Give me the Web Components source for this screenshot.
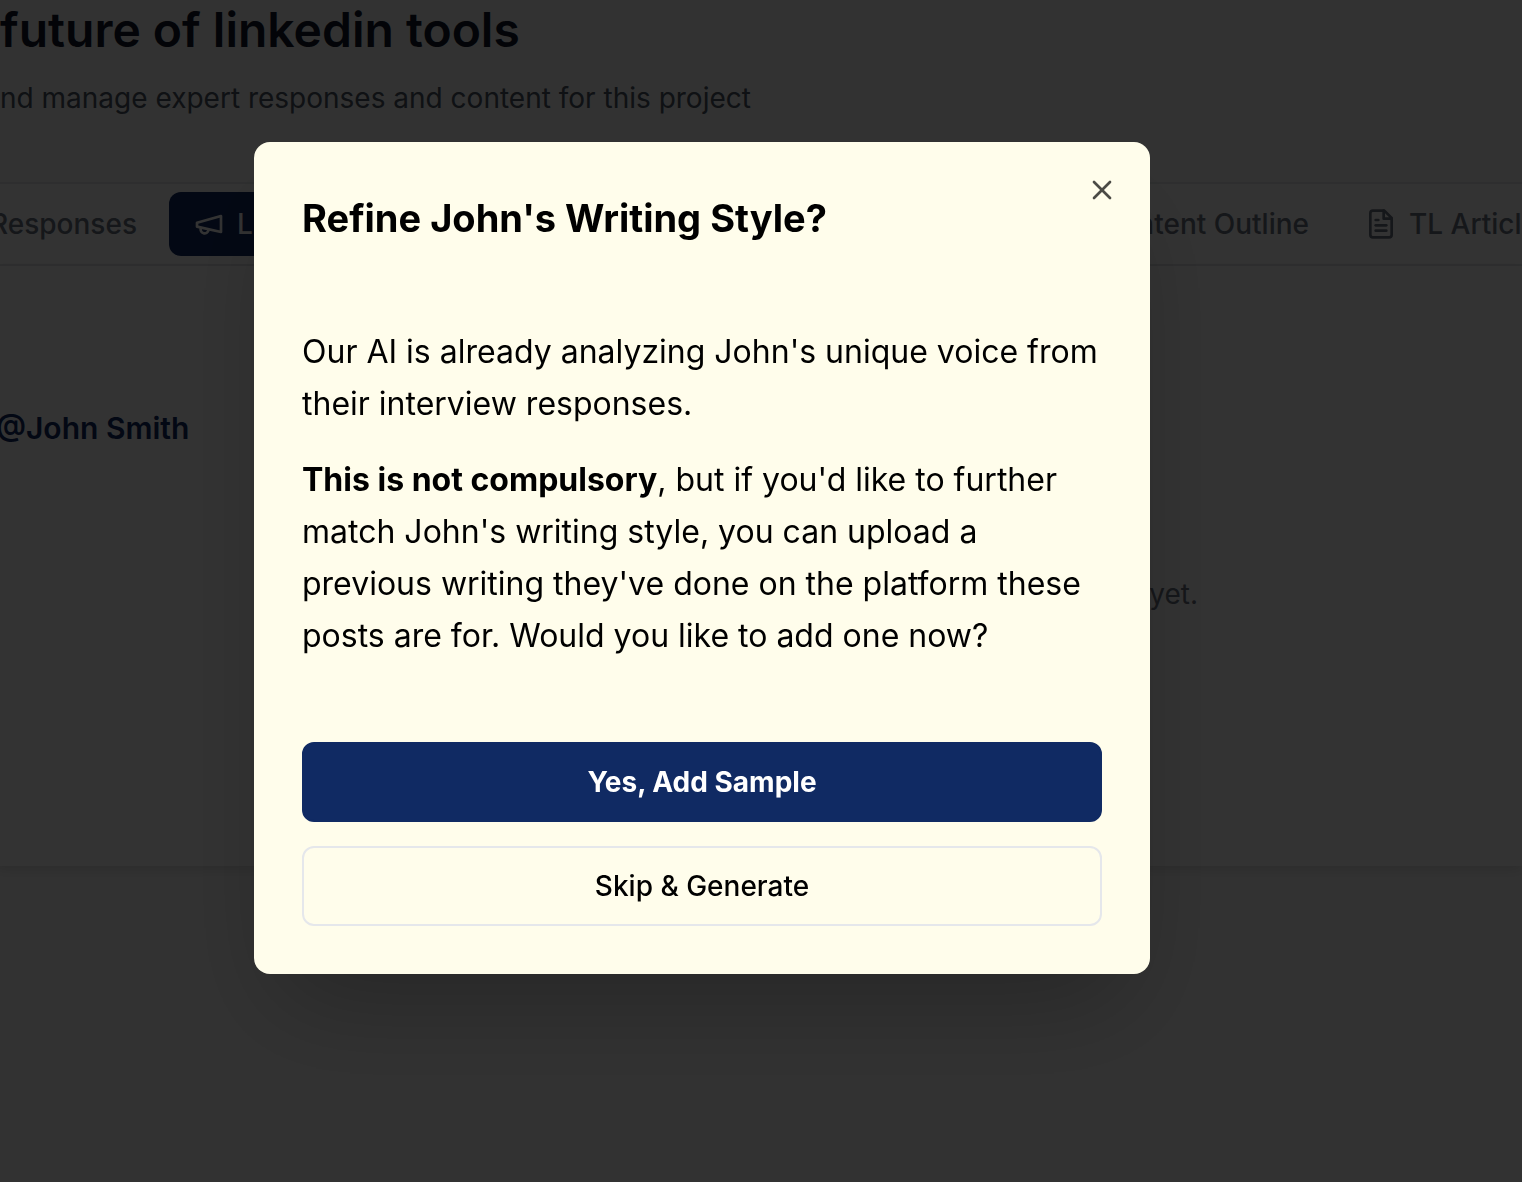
<!DOCTYPE html>
<html lang="en">
<head>
<meta charset="utf-8">
<meta name="viewport" content="width=device-width, initial-scale=1">
<title>Future of linkedin tools</title>
<style>
    body {
        margin: 0;
        min-height: 100vh;
        overflow: hidden;
        background: #fafafa;
        color: #000;
        font-family: Inter, "Liberation Sans", sans-serif;
        --navy: #102a63;
        --cream: #fffdeb;
        --line: #e5e7eb;
        --muted: #6b7280;
    }
</style>
</head>
<body>
<project-page>
    <span slot="title">future of linkedin tools</span>
    <span slot="subtitle">nd manage expert responses and content for this project</span>
    <tab-bar slot="tabs">
        <tab-item>Responses</tab-item>
        <tab-item icon="megaphone" active>LinkedIn Posts</tab-item>
        <tab-item slot="end" icon="file">Content Outline</tab-item>
        <tab-item slot="end" icon="file">TL Article</tab-item>
    </tab-bar>
    <expert-panel name="@John Smith">yet.</expert-panel>
</project-page>

<modal-dialog>
    <span slot="title">Refine John's Writing Style?</span>
    <p>Our AI is already analyzing John's unique voice from their interview responses.</p>
    <p><strong>This is not compulsory</strong>, but if you'd like to further match John's writing style, you can upload a previous writing they've done on the platform these posts are for. Would you like to add one now?</p>
    <action-button slot="actions" variant="primary">Yes, Add Sample</action-button>
    <action-button slot="actions">Skip &amp; Generate</action-button>
</modal-dialog>

<script>
// lucide-style icons, 24x24 grid
const ICONS = {
    megaphone: '<path d="m3 11 18-5v12L3 14v-3z"/><path d="M11.6 16.8a3 3 0 1 1-5.8-1.6"/>',
    file: '<path d="M14.5 2H6a2 2 0 0 0-2 2v16a2 2 0 0 0 2 2h12a2 2 0 0 0 2-2V7.5L14.5 2z"/><path d="M14 2v6h6"/><path d="M16 13H8"/><path d="M16 17H8"/><path d="M10 9H8"/>',
    close: '<path d="M18 6 6 18"/><path d="m6 6 12 12"/>',
};

function icon(name) {
    if (!ICONS[name]) return "";
    return `<svg width="32" height="32" viewBox="0 0 24 24" fill="none" stroke="currentColor" stroke-width="2" stroke-linecap="round" stroke-linejoin="round" aria-hidden="true">${ICONS[name]}</svg>`;
}

class ProjectPage extends HTMLElement {
    constructor() {
        super();
        this.attachShadow({ mode: "open" });
    }

    connectedCallback() {
        this.shadowRoot.innerHTML = `
        <style>
            :host { display: block; }
            header {
                display: flex;
                flex-direction: column;
                gap: 20px;
                padding: 2px 0 64px;
            }
            h1 {
                margin: 0;
                font-size: 48px;
                line-height: 56px;
                font-weight: 600;
                color: #0f172a;
            }
            header p {
                margin: 0;
                font-size: 28px;
                line-height: 40px;
                color: #4b5563;
            }
        </style>
        <header>
            <h1><slot name="title"></slot></h1>
            <p><slot name="subtitle"></slot></p>
        </header>
        <slot name="tabs"></slot>
        <main><slot></slot></main>
        `;
    }
}

class TabBar extends HTMLElement {
    constructor() {
        super();
        this.attachShadow({ mode: "open" });
    }

    connectedCallback() {
        this.shadowRoot.innerHTML = `
        <style>
            :host { display: block; overflow: hidden; }
            nav {
                display: flex;
                justify-content: space-between;
                padding: 8px 0;
                border-top: 2px solid var(--line);
                border-bottom: 2px solid var(--line);
                background: #fff;
                /* the strip is scrolled, both ends run off screen */
                margin: 0 -40px 0 -34px;
            }
            div { display: flex; gap: 8px; }
        </style>
        <nav aria-label="Project sections">
            <div><slot></slot></div>
            <div><slot name="end"></slot></div>
        </nav>
        `;
    }
}

class TabItem extends HTMLElement {
    constructor() {
        super();
        this.attachShadow({ mode: "open" });
    }

    connectedCallback() {
        this.shadowRoot.innerHTML = `
        <style>
            :host { display: block; }
            button {
                display: flex;
                align-items: center;
                gap: 12px;
                height: 64px;
                padding: 0 24px;
                border: 0;
                border-radius: 12px;
                background: transparent;
                color: var(--muted);
                font: 500 28px/40px Inter, "Liberation Sans", sans-serif;
                white-space: nowrap;
                cursor: pointer;
            }
            :host([active]) button {
                background: var(--navy);
                color: #fff;
            }
        </style>
        <button type="button">${icon(this.getAttribute("icon"))}<slot></slot></button>
        `;
    }
}

class ExpertPanel extends HTMLElement {
    constructor() {
        super();
        this.attachShadow({ mode: "open" });
    }

    connectedCallback() {
        this.shadowRoot.innerHTML = `
        <style>
            :host {
                display: block;
                margin-left: -4px;
                padding: 140px 0 252px;
                background: #fff;
                box-shadow: 0 4px 12px rgba(0, 0, 0, 0.12);
            }
            h2 {
                margin: 0 0 124px;
                font-size: 30px;
                line-height: 44px;
                font-weight: 600;
                color: var(--navy);
            }
            p {
                margin: 0;
                padding-right: 324px;
                font-size: 28px;
                line-height: 40px;
                text-align: right;
                color: var(--muted);
            }
        </style>
        <h2>${this.getAttribute("name")}</h2>
        <p><slot></slot></p>
        `;
    }
}

class ModalDialog extends HTMLElement {
    constructor() {
        super();
        this.attachShadow({ mode: "open" });
        this.close = this.close.bind(this);
    }

    connectedCallback() {
        this.render();
        this.shadowRoot.getElementById("close").addEventListener("click", this.close);
    }

    close() {
        this.hidden = true;
    }

    render() {
        this.shadowRoot.innerHTML = `
        <style>
            :host {
                position: fixed;
                inset: 0;
                display: flex;
                align-items: center;
                justify-content: center;
                padding: 0 118px 66px 0;
                background: rgba(0, 0, 0, 0.8);
            }
            :host([hidden]) { display: none; }
            section {
                position: relative;
                box-sizing: border-box;
                width: 100%;
                max-width: 896px;
                padding: 48px;
                display: flex;
                flex-direction: column;
                gap: 80px;
                border-radius: 16px;
                background: var(--cream);
                box-shadow: 0 50px 100px -24px rgba(0, 0, 0, 0.25);
            }
            h2 {
                margin: 0;
                font-size: 38px;
                line-height: 56px;
                font-weight: 700;
            }
            .body {
                display: flex;
                flex-direction: column;
                gap: 24px;
                font-size: 32px;
                line-height: 52px;
            }
            ::slotted(p) { margin: 0; }
            .actions {
                display: flex;
                flex-direction: column;
                gap: 24px;
            }
            #close {
                position: absolute;
                top: 32px;
                right: 32px;
                display: flex;
                padding: 0;
                border: 0;
                background: none;
                color: #000;
                opacity: 0.7;
                cursor: pointer;
            }
            #close:hover { opacity: 1; }
        </style>
        <section role="dialog" aria-modal="true" aria-labelledby="heading">
            <h2 id="heading"><slot name="title"></slot></h2>
            <div class="body"><slot></slot></div>
            <div class="actions"><slot name="actions"></slot></div>
            <button id="close" type="button" aria-label="Close">${icon("close")}</button>
        </section>
        `;
    }
}

class ActionButton extends HTMLElement {
    constructor() {
        super();
        this.attachShadow({ mode: "open" });
    }

    connectedCallback() {
        this.shadowRoot.innerHTML = `
        <style>
            :host { display: block; }
            button {
                box-sizing: border-box;
                width: 100%;
                height: 80px;
                border: 2px solid var(--line);
                border-radius: 12px;
                background: transparent;
                color: #000;
                font: 500 28px/40px Inter, "Liberation Sans", sans-serif;
                cursor: pointer;
            }
            :host([variant="primary"]) button {
                border-color: var(--navy);
                background: var(--navy);
                color: #fff;
                font-weight: 700;
            }
        </style>
        <button type="button"><slot></slot></button>
        `;
    }
}

customElements.define("project-page", ProjectPage);
customElements.define("tab-bar", TabBar);
customElements.define("tab-item", TabItem);
customElements.define("expert-panel", ExpertPanel);
customElements.define("modal-dialog", ModalDialog);
customElements.define("action-button", ActionButton);
</script>
</body>
</html>
